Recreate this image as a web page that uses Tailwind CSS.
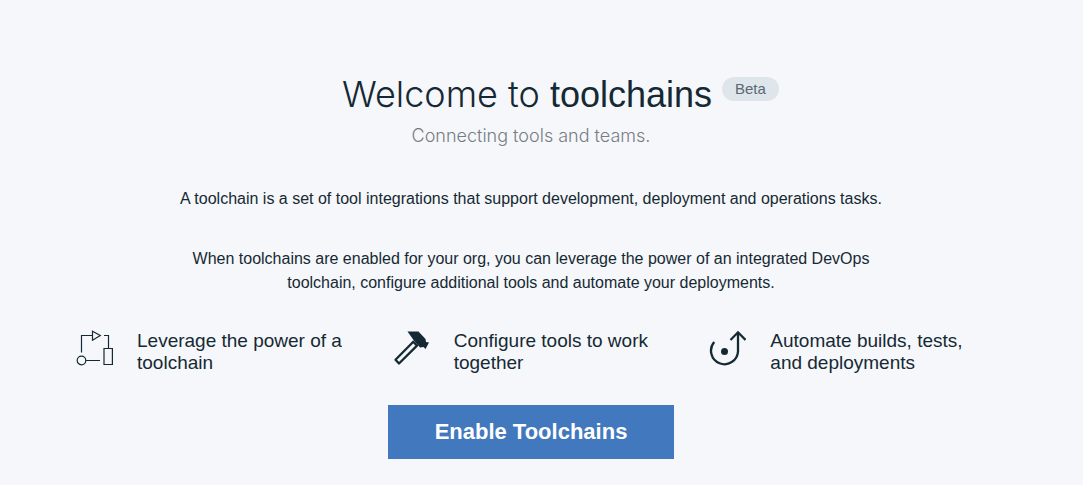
<!DOCTYPE html>
<html lang="en">
<head>
<meta charset="utf-8">
<title>Toolchains</title>
<script src="https://cdn.jsdelivr.net/npm/@tailwindcss/browser@4"></script>
</head>
<body class="min-h-screen bg-[#f5f7fa] pr-[21px] font-['Liberation_Sans',sans-serif] text-[#152934]">
<main class="mx-auto flex max-w-[950px] flex-col items-center pt-[70px] pb-6 text-center">
  <div class="relative pr-2">
    <h1 class="text-[36px] leading-12"><span class="font-['Inter',sans-serif] font-light">Welcome to</span> toolchains</h1>
    <span class="absolute top-[7px] left-full ml-0.5 rounded-full bg-[#dfe6eb] px-[13px] text-[15px] leading-6 text-[#5a6872]">Beta</span>
  </div>
  <p class="mt-[3px] font-['Inter',sans-serif] text-[18px] leading-7 font-light text-[#777d84]">Connecting tools and teams.</p>
  <p class="mt-[37px] text-[16px] leading-6">A toolchain is a set of tool integrations that support development, deployment and operations tasks.</p>
  <p class="mt-9 max-w-[720px] text-[16px] leading-6">When toolchains are enabled for your org, you can leverage the power of an integrated DevOps toolchain, configure additional tools and automate your deployments.</p>
  <ul class="mt-[35px] grid w-full grid-cols-3 text-left text-[19px] leading-[22px]">
    <li class="flex gap-6 pl-5">
      <svg class="size-[37px] shrink-0" viewBox="0 0 37 37" fill="none" stroke="#152934" stroke-width="1.2" aria-hidden="true">
        <path d="M5.500 22.500V5.500H16.500M16.500 1.200V10.200L24.300 5.600ZM28 5.500H32.500V18.500M28 18.500H36.400V34.500H28ZM10 30.500H24"/><circle cx="5.500" cy="30.500" r="4.300"/>
      </svg>
      <span class="flex-1 pr-6">Leverage the power of a toolchain</span>
    </li>
    <li class="flex gap-6 pl-5">
      <svg class="size-[37px] shrink-0" viewBox="0 0 37 37" fill="none" aria-hidden="true">
        <path fill="#152934" d="M14.500 1.500H25.500L32.500 9L33 12L36 12.500L32.500 19L30.500 17L27 17.500L20.500 10Z"/>
        <path stroke="#152934" stroke-width="2.300" stroke-linejoin="round" d="M20.300 11.700L2.500 29.700L6 33.500L24 15.600Z"/>
      </svg>
      <span class="flex-1 pr-6">Configure tools to work together</span>
    </li>
    <li class="flex gap-6 pl-5">
      <svg class="size-[37px] shrink-0" viewBox="0 0 37 37" fill="none" stroke="#152934" stroke-width="2.300" aria-hidden="true">
        <path d="M5.200 12A13.500 13.500 0 1 0 29 21.500V2.500M21.500 10L29 2.300L36.500 10"/><circle cx="15.500" cy="21.500" r="3.500" fill="#152934" stroke="none"/>
      </svg>
      <span class="flex-1 pr-6">Automate builds, tests, and deployments</span>
    </li>
  </ul>
  <button type="button" class="mt-[31px] bg-[#4178be] px-[47px] py-[11px] text-[22px] leading-8 font-bold text-white">Enable Toolchains</button>
</main>
</body>
</html>
